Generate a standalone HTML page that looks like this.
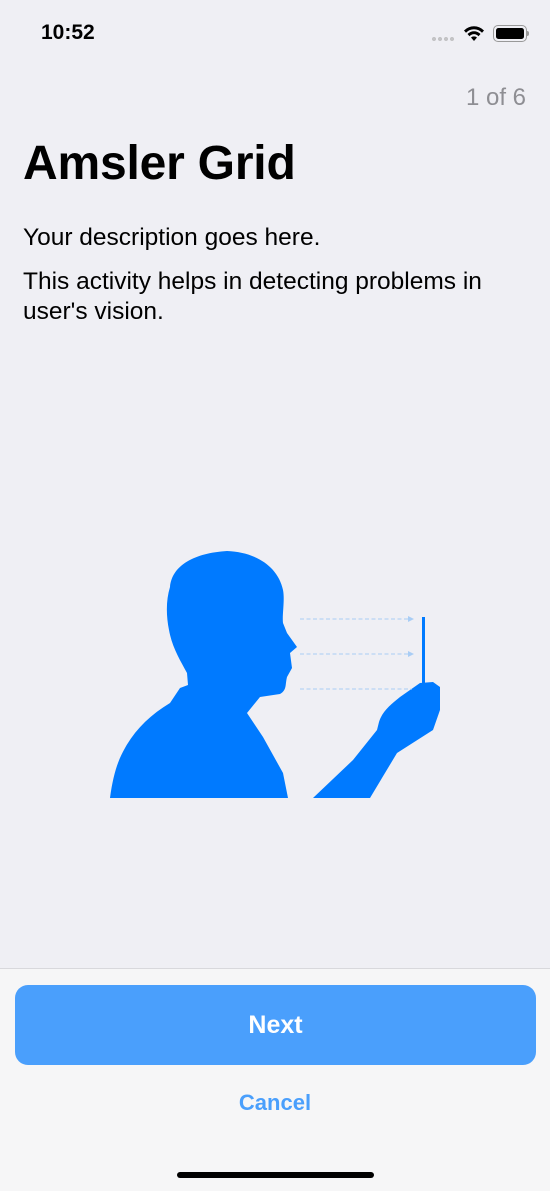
<!DOCTYPE html>
<html><head><meta charset="utf-8"><style>
*{margin:0;padding:0;box-sizing:border-box}
body{width:550px;height:1191px;background:#efeff4;font-family:"Liberation Sans",sans-serif;position:relative;overflow:hidden}
.abs{position:absolute}
</style></head><body>
<div class="abs" style="left:41px;top:21px;font-size:21px;font-weight:bold;color:#000">10:52</div>
<div class="abs" style="left:431px;top:37px;width:24px;height:4px;background:radial-gradient(circle,#c4c4c6 2px,transparent 2.2px) 0 0/6px 4px repeat-x"></div>
<svg class="abs" style="left:462px;top:24px" width="24" height="18" viewBox="0 0 24 18"><path d="M2 6.5a14 14 0 0 1 20 0l-2 2.2a11 11 0 0 0-16 0z M5.5 10a9 9 0 0 1 13 0l-2 2.2a6 6 0 0 0-9 0z M9 13.5a4.5 4.5 0 0 1 6 0L12 17z" fill="#000"/></svg>
<div class="abs" style="left:493px;top:25px;width:34px;height:17px;border:1.5px solid #999;border-radius:5px;padding:2px"><div style="width:100%;height:100%;background:#000;border-radius:2.5px"></div></div>
<div class="abs" style="left:527px;top:31px;width:2px;height:5px;background:#999;border-radius:0 2px 2px 0"></div>
<div class="abs" style="right:24px;top:84px;font-size:24px;color:#8e8e93">1 of 6</div>
<div class="abs" style="left:23px;top:136px;font-size:48px;font-weight:bold;color:#000;letter-spacing:-0.2px">Amsler Grid</div>
<div class="abs" style="left:23px;top:224px;font-size:24.5px;color:#000">Your description goes here.</div>
<div class="abs" style="left:23px;top:267px;width:510px;font-size:24.5px;line-height:30px;color:#000">This activity helps in detecting problems in user's vision.</div>
<svg class="abs" style="left:0;top:0" width="550" height="900" viewBox="0 0 550 900">
<path fill="#007aff" d="M170 587 C172 565 195 553 227 551 C255 552 278 566 283 590 C285 600 282 615 283 623 L287 633 L297 647 L290 653 L292 668 L287 677 C285 685 287 690 280 694 L260 697 L247 713 L263 737 L283 773 L288 798 L110 798 C113 775 118 760 125 748 C135 730 150 715 170 703 L180 688 L188 685 L187 673 C180 660 172 647 169 630 C166 615 166 600 170 587 Z"/>
<path fill="#007aff" d="M313 798 L370 798 L397 753 L433 730 L440 710 L440 687 L433 682 L420 683 L400 697 C390 705 382 712 379 722 L377 730 L353 760 Z"/>
<rect x="422" y="617" width="3" height="68" fill="#007aff"/>
<g stroke="#a9cdf5" stroke-width="1" stroke-dasharray="4 2.5"><line x1="300" y1="619" x2="408" y2="619"/><line x1="300" y1="654" x2="408" y2="654"/><line x1="300" y1="689" x2="412" y2="689"/></g>
<path fill="#a9cdf5" d="M408 616l6 3-6 3z M408 651l6 3-6 3z"/>
</svg>
<div class="abs" style="left:0;top:968px;width:550px;height:223px;background:#f6f6f7;border-top:1px solid #d8d8dc"></div>
<div class="abs" style="left:15px;top:985px;width:521px;height:80px;background:#4a9ffc;border-radius:13px;color:#fff;font-size:25px;font-weight:bold;text-align:center;line-height:80px">Next</div>
<div class="abs" style="left:0;top:1090px;width:550px;text-align:center;font-size:22px;font-weight:bold;color:#4a9ffc">Cancel</div>
<div class="abs" style="left:177px;top:1172px;width:197px;height:6px;background:#000;border-radius:3px"></div>
</body></html>
